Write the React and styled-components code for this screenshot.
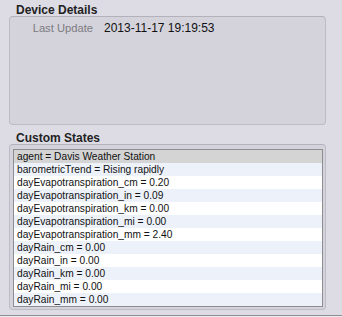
import React from "react";
import styled, { createGlobalStyle } from "styled-components";

const Global = createGlobalStyle`
  html, body { margin: 0; padding: 0; }
  body {
    background: #dddce5;
    font-family: "Liberation Sans", Arial, sans-serif;
    width: 342px;
    height: 317px;
    overflow: hidden;
  }
`;

const Page = styled.div`
  width: 342px;
  height: 317px;
  display: flex;
  flex-direction: column;
  box-sizing: border-box;
`;

const SectionTitle = styled.div`
  height: ${(p) => p.$h}px;
  padding-left: 16px;
  font-weight: bold;
  font-size: 12px;
  color: #222;
  display: flex;
  align-items: flex-end;
  line-height: 12px;
  box-sizing: border-box;
  padding-bottom: ${(p) => p.$pb}px;
`;

const GroupBox = styled.div`
  margin: 0 16px 0 9px;
  height: ${(p) => p.$h}px;
  box-sizing: border-box;
  background: #d4d3dc;
  border: 1px solid #bdbcc5;
  border-top-color: #b3b2bb;
  border-radius: 4px;
  padding: ${(p) => p.$pad};
`;

const InfoRow = styled.div`
  display: grid;
  grid-template-columns: 83px 1fr;
  column-gap: 11px;
  font-size: 12px;
  line-height: 14px;
  padding-top: 4px;
`;

const InfoLabel = styled.span`
  text-align: right;
  color: #7c7b80;
  font-size: 11.2px;
`;

const InfoValue = styled.span`
  color: #111;
`;

const List = styled.div`
  background: #fff;
  border: 1px solid #8d8d8f;
  height: 158px;
  box-sizing: border-box;
  display: flex;
  flex-direction: column;
`;

const Row = styled.div`
  height: 13px;
  flex: none;
  font-size: 10.2px;
  line-height: 13px;
  padding-left: 3px;
  color: #111;
  background: ${(p) => (p.$selected ? "#d4d4d4" : p.$alt ? "#edf2fa" : "#ffffff")};
  white-space: nowrap;
`;

const Footer = styled.div`
  margin-top: auto;
  height: 2px;
  border-top: 1px solid #8e8d92;
  background: #ecebf0;
  box-sizing: border-box;
`;

const states = [
  "agent = Davis Weather Station",
  "barometricTrend = Rising rapidly",
  "dayEvapotranspiration_cm = 0.20",
  "dayEvapotranspiration_in = 0.09",
  "dayEvapotranspiration_km = 0.00",
  "dayEvapotranspiration_mi = 0.00",
  "dayEvapotranspiration_mm = 2.40",
  "dayRain_cm = 0.00",
  "dayRain_in = 0.00",
  "dayRain_km = 0.00",
  "dayRain_mi = 0.00",
  "dayRain_mm = 0.00",
];

export default function App() {
  return (
    <>
      <Global />
      <Page>
        <SectionTitle $h={16} $pb={0}>Device Details</SectionTitle>
        <GroupBox $h={109} $pad="0">
          <InfoRow>
            <InfoLabel>Last Update</InfoLabel>
            <InfoValue>2013-11-17 19:19:53</InfoValue>
          </InfoRow>
        </GroupBox>
        <SectionTitle $h={19} $pb={0}>Custom States</SectionTitle>
        <GroupBox $h={166} $pad="4px 2px 0 3px">
          <List>
            {states.map((s, i) => (
              <Row key={s} $selected={i === 0} $alt={i % 2 === 1}>
                {s}
              </Row>
            ))}
          </List>
        </GroupBox>
        <Footer />
      </Page>
    </>
  );
}
